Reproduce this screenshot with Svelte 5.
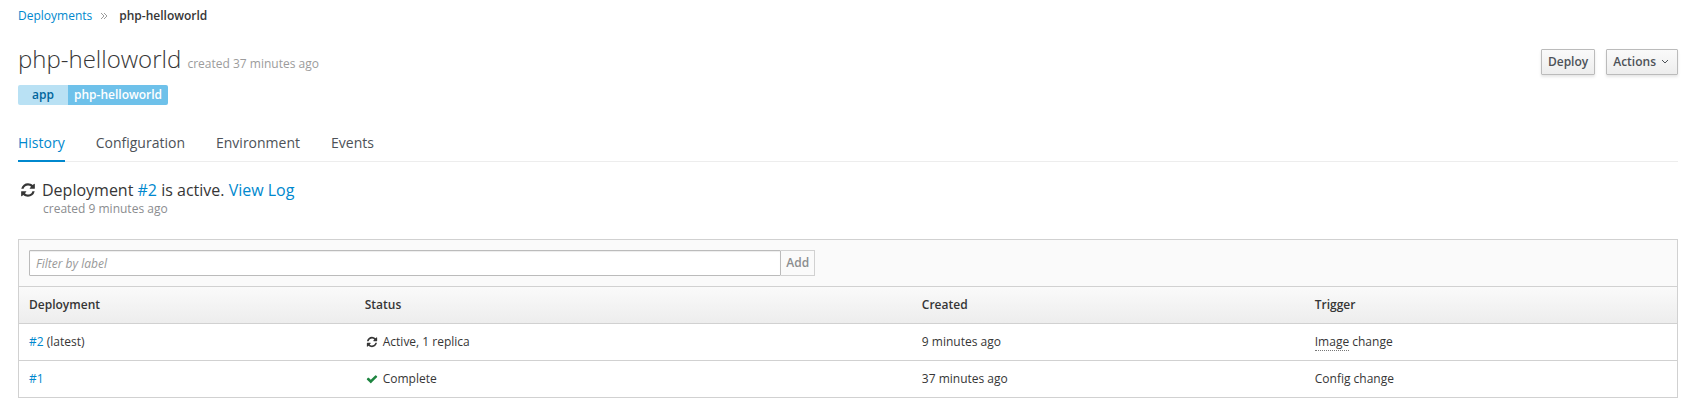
<script>
  const tabs = ['History', 'Configuration', 'Environment', 'Events'];
  let active = $state('History');
  let filter = $state('');

  const deployments = [
    { id: '#2', latest: true, icon: 'refresh', status: 'Active, 1 replica', created: '9 minutes ago', source: 'Image' },
    { id: '#1', latest: false, icon: 'check', status: 'Complete', created: '37 minutes ago', source: 'Config' }
  ];

  const refreshPath =
    'M1639 1056q0 5-1 7-64 268-268 434.5t-478 166.5q-146 0-282.5-55t-243.5-157l-129 129q-19 19-45 19t-45-19-19-45v-448q0-26 19-45t45-19h448q26 0 45 19t19 45-19 45l-137 137q71 66 161 102t187 36q134 0 250-65t186-179q11-17 53-117 8-23 30-23h192q13 0 22.5 9.5t9.5 22.5zm25-800v448q0 26-19 45t-45 19h-448q-26 0-45-19t-19-45 19-45l138-138q-148-137-349-137-134 0-250 65t-186 179q-11 17-53 117-8 23-30 23h-199q-13 0-22.5-9.5t-9.5-22.5v-7q65-268 270-434.5t480-166.5q146 0 284 55.5t245 156.5l130-129q19-19 45-19t45 19 19 45z';
  const checkPath =
    'M1671 566q0 40-28 68l-724 724-136 136q-28 28-68 28t-68-28l-136-136-362-362q-28-28-28-68t28-68l136-136q28-28 68-28t68 28l294 295 656-657q28-28 68-28t68 28l136 136q28 28 28 68z';
</script>

<main>
  <nav class="breadcrumb" aria-label="Breadcrumb">
    <a href="#deployments">Deployments</a>
    <svg class="sep" viewBox="0 0 8 8" aria-hidden="true"><path d="M1 1l3 3-3 3M4 1l3 3-3 3" /></svg>
    <strong>php-helloworld</strong>
  </nav>

  <header>
    <div>
      <h1>php-helloworld <small>created 37 minutes ago</small></h1>
      <div class="label-pair">
        <span class="key">app</span><a class="value" href="#label">php-helloworld</a>
      </div>
    </div>
    <div class="actions">
      <button class="btn" type="button">Deploy</button>
      <button class="btn" type="button">
        Actions
        <svg class="caret" viewBox="0 0 8 8" aria-hidden="true"><path d="M1 2l3 3 3-3" /></svg>
      </button>
    </div>
  </header>

  <div class="tabs" role="tablist">
    {#each tabs as tab}
      <button type="button" role="tab" aria-selected={active === tab} class:selected={active === tab} onclick={() => (active = tab)}>{tab}</button>
    {/each}
  </div>

  <section class="summary">
    <svg class="big-icon" viewBox="0 0 1792 1792" aria-hidden="true"><path d={refreshPath} /></svg>
    <div>
      <p class="lead">Deployment <a href="#2">#2</a> is active. <a href="#log">View Log</a></p>
      <p class="age">created 9 minutes ago</p>
    </div>
  </section>

  <section class="panel">
    <form class="toolbar" onsubmit={(e) => e.preventDefault()}>
      <div class="filter">
        <input type="text" aria-label="Filter by label" placeholder="Filter by label" bind:value={filter} />
        <button class="add" type="submit" disabled>Add</button>
      </div>
    </form>
    <table>
      <colgroup>
        <col class="c1" /><col class="c2" /><col class="c3" /><col />
      </colgroup>
      <thead>
        <tr><th>Deployment</th><th>Status</th><th>Created</th><th>Trigger</th></tr>
      </thead>
      <tbody>
        {#each deployments as d}
          <tr>
            <td><a href={d.id}>{d.id}</a>{#if d.latest}{' '}(latest){/if}</td>
            <td>
              <span class="status">
                <svg class="icon {d.icon}" viewBox="0 0 1792 1792" aria-hidden="true">
                  <path d={d.icon === 'check' ? checkPath : refreshPath} />
                </svg>
                {d.status}
              </span>
            </td>
            <td>{d.created}</td>
            <td><span class:hint={d.latest}>{d.source}</span> change</td>
          </tr>
        {/each}
      </tbody>
    </table>
  </section>
</main>

<style>
  :global(body) {
    margin: 0;
    background: #fff;
  }
  main {
    padding: 6px 11px 7px 18px;
    font: 12px/20px 'Open Sans', sans-serif;
    color: #363636;
  }
  a {
    color: #0088ce;
    text-decoration: none;
  }
  button,
  input {
    font: inherit;
    margin: 0;
    box-sizing: border-box;
  }
  svg {
    flex: none;
  }
  .breadcrumb {
    display: flex;
    align-items: center;
  }
  .breadcrumb strong {
    font-weight: 600;
  }
  .sep {
    width: 8px;
    height: 8px;
    margin: 0 11px 0 8px;
    fill: none;
    stroke: #9c9c9c;
  }
  header {
    display: flex;
    justify-content: space-between;
    align-items: flex-start;
    margin-top: 18px;
  }
  h1 {
    margin: 0;
    font-size: 24px;
    line-height: 30px;
    font-weight: 300;
  }
  h1 small {
    font-size: 12px;
    line-height: 12px;
    font-weight: 400;
    color: #9c9c9c;
  }
  .label-pair {
    display: inline-flex;
    margin-top: 11px;
    border-radius: 2px;
    overflow: hidden;
    font-weight: 600;
    line-height: 20px;
    vertical-align: top;
  }
  .key {
    min-width: 50px;
    box-sizing: border-box;
    text-align: center;
    background: #b9e1f4;
    color: #00659c;
  }
  .value {
    padding: 0 6px;
    background: #6ec1ea;
    color: #fff;
  }
  .actions {
    display: flex;
    gap: 11px;
    margin-top: 5px;
  }
  .btn {
    display: flex;
    align-items: center;
    height: 26px;
    padding: 0 6px;
    border: 1px solid #bbb;
    border-radius: 1px;
    background: linear-gradient(#fafafa, #ededed);
    box-shadow: 0 2px 3px rgba(3, 3, 3, 0.1);
    color: #4d5258;
    font-weight: 600;
  }
  .caret {
    width: 8px;
    height: 8px;
    margin: 0 2px 0 5px;
    fill: none;
    stroke: #4d5258;
  }
  .tabs {
    display: flex;
    gap: 31px;
    margin-top: 24px;
    border-bottom: 1px solid #ededed;
  }
  .tabs button {
    padding: 4px 0 7px;
    margin-bottom: -1px;
    border: 0;
    border-bottom: 2px solid transparent;
    background: none;
    color: #4d5258;
    font-size: 14px;
    line-height: 20px;
  }
  .tabs .selected {
    border-color: #0088ce;
    color: #0088ce;
  }
  .summary {
    display: flex;
    gap: 6px;
    margin-top: 18px;
    padding-left: 2px;
  }
  .summary p {
    margin: 0;
  }
  .big-icon {
    width: 16px;
    height: 16px;
    margin-top: 2px;
    fill: #363636;
  }
  .lead {
    font-size: 16px;
    line-height: 20px;
  }
  .summary .age {
    padding-left: 1px;
    line-height: 18px;
    color: #8b8d8f;
  }
  .panel {
    margin-top: 21px;
    border: 1px solid #d1d1d1;
  }
  .toolbar {
    padding: 10px;
    background: #fafafa;
  }
  .filter {
    display: flex;
    width: 48%;
  }
  .filter input {
    flex: 1;
    min-width: 0;
    height: 26px;
    padding: 0 6px;
    border: 1px solid #bbb;
    border-radius: 1px;
    background: #fff;
    box-shadow: inset 0 1px 1px rgba(3, 3, 3, 0.075);
    color: #363636;
  }
  .filter input::placeholder {
    color: #999;
    font-style: italic;
    opacity: 1;
  }
  .add {
    height: 26px;
    padding: 0 5px;
    border: 1px solid #d1d1d1;
    border-left: 0;
    background: #fafafa;
    color: #8b8d8f;
    font-weight: 600;
  }
  table {
    width: 100%;
    table-layout: fixed;
    border-collapse: separate;
    border-spacing: 0;
  }
  .c1 {
    width: 20.25%;
  }
  .c2 {
    width: 33.6%;
  }
  .c3 {
    width: 23.7%;
  }
  th,
  td {
    padding: 8px 10px;
    border-top: 1px solid #d1d1d1;
    text-align: left;
  }
  th {
    font-weight: 600;
    background: linear-gradient(#fafafa, #ededed);
  }
  .status {
    display: flex;
    align-items: center;
    gap: 5px;
    padding-left: 1px;
  }
  .icon {
    width: 12px;
    height: 12px;
    fill: #363636;
  }
  .check {
    fill: #1e8540;
  }
  .hint {
    border-bottom: 1px dotted #777;
  }
</style>
